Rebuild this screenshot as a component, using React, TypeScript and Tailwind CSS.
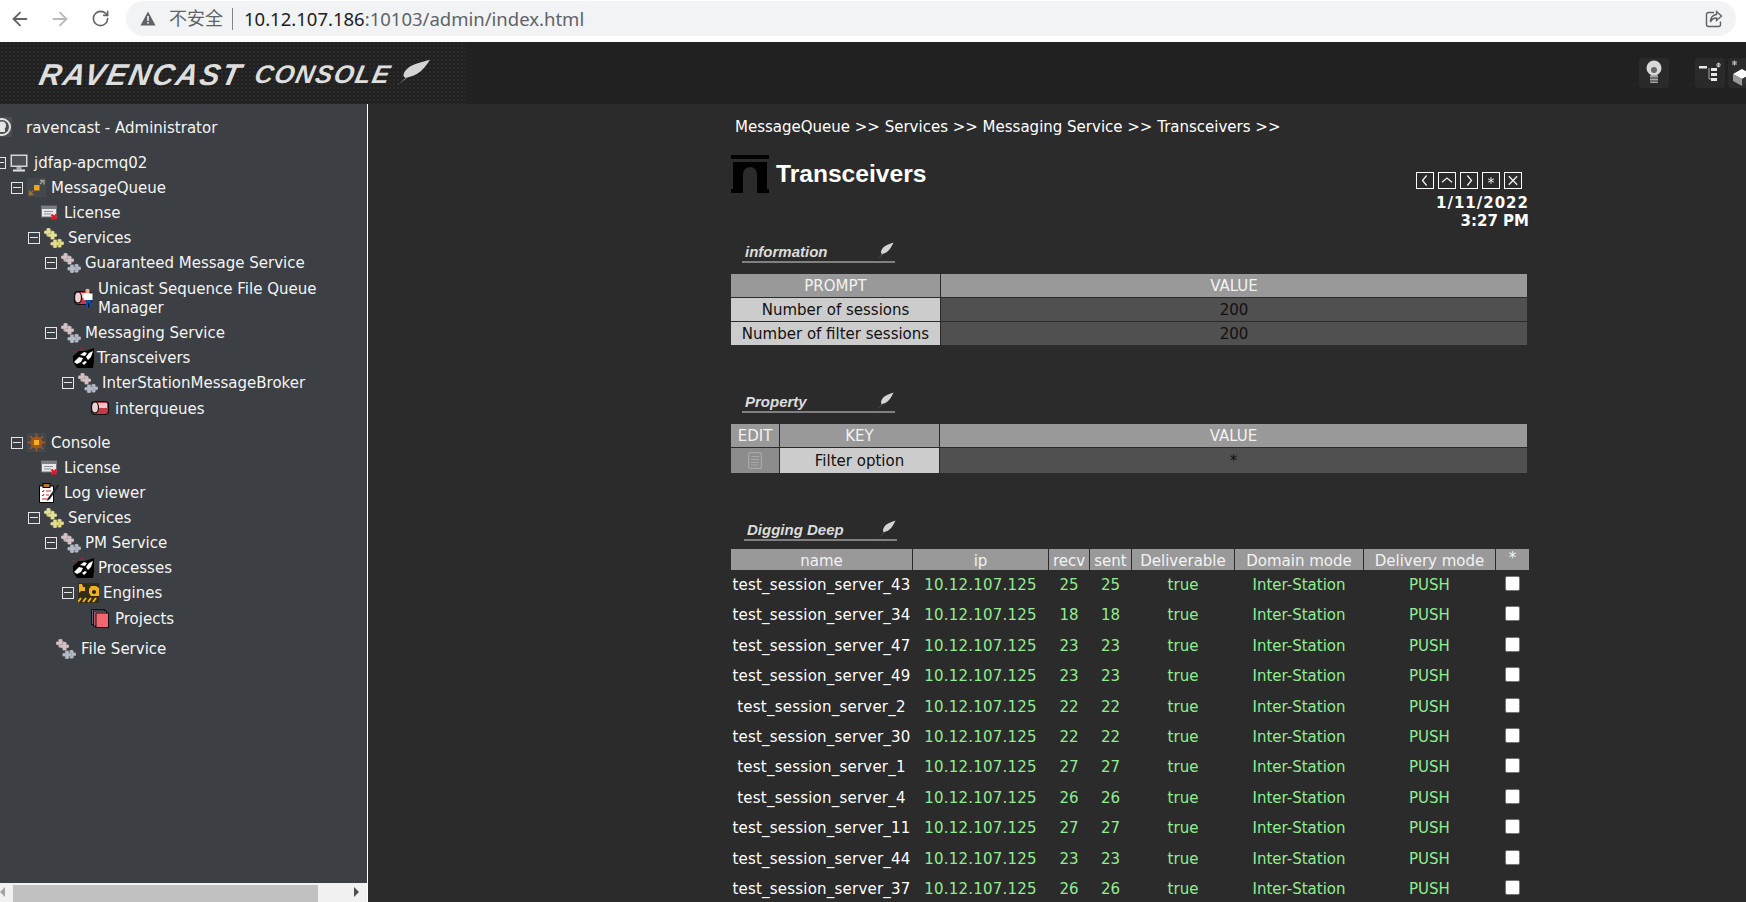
import type { ReactNode } from 'react'
import { ArrowLeft, ArrowRight, RotateCw } from 'lucide-react'

const verdana = "font-['DejaVu_Sans','Noto_Sans_CJK_SC',sans-serif]"

function GearBlob({ x, y, fill }: { x: number; y: number; fill: string }) {
  return (
    <g fill={fill} stroke="#66685f" strokeWidth="0.300">
      <rect x={x + 2.500} y={y} width="4" height="3.500" rx="1.200" />
      <rect x={x} y={y + 2.500} width="4" height="3.500" rx="1.200" />
      <rect x={x + 5} y={y + 2.500} width="4" height="3.500" rx="1.200" />
      <rect x={x + 2.500} y={y + 5} width="4" height="3.500" rx="1.200" />
      <circle cx={x + 4.500} cy={y + 4.200} r="2" stroke="none" />
    </g>
  )
}

function Gears({ tone }: { tone: 'yellow' | 'grey' }) {
  const a = tone === 'yellow' ? '#e6e199' : '#d6c2c6'
  const b = tone === 'yellow' ? '#e6dd8b' : '#b4bac8'
  return (
    <svg width="20" height="20" viewBox="0 0 20 20" className="shrink-0">
      <GearBlob x={0} y={0} fill={a} />
      <GearBlob x={4} y={3} fill={a} />
      <GearBlob x={11} y={11} fill={b} />
      <GearBlob x={6.500} y={11.500} fill={b} />
    </svg>
  )
}

function Monitor() {
  return (
    <svg width="18" height="18" viewBox="0 0 18 18" className="shrink-0">
      <rect x="0.500" y="0.500" width="17" height="12.500" fill="#d4d6d9" />
      <rect x="2" y="2" width="14" height="9.500" fill="#4d5056" />
      <rect x="6.500" y="13" width="5" height="2.500" fill="#a9adb2" />
      <rect x="3" y="15.500" width="12" height="2" fill="#dfe1e3" />
    </svg>
  )
}

function QueueArrows() {
  return (
    <svg width="19" height="19" viewBox="0 0 19 19" className="shrink-0">
      <rect width="19" height="19" fill="#44474c" />
      <rect x="7" y="7" width="5.500" height="5.500" fill="#eda51f" />
      <path d="M13 6l3-3M13 2.500h4v4" stroke="#a79f8b" strokeWidth="1.400" fill="none" />
      <path d="M6 13l-3 3M2.500 12.500v4h4" stroke="#a5762d" strokeWidth="1.400" fill="none" />
    </svg>
  )
}

function LicenseIcon() {
  return (
    <svg width="17" height="16" viewBox="0 0 17 16" className="shrink-0">
      <rect x="0.500" y="1" width="15" height="11" fill="#e7e8ea" stroke="#6f7276" />
      <rect x="0.500" y="1" width="15" height="3" fill="#7a7f87" />
      <path d="M3 6.500h9M3 9h7" stroke="#8b8f94" />
      <path d="M10.500 9.500l5 5M15.500 9.500l-5 5" stroke="#f0141e" strokeWidth="2.200" />
    </svg>
  )
}

function SunIcon() {
  return (
    <svg width="19" height="19" viewBox="0 0 19 19" className="shrink-0">
      <rect width="19" height="19" fill="#44474c" />
      <path d="M9.500 0.500v18M0.500 9.500h18M3 3l13 13M16 3L3 16" stroke="#a85a25" strokeWidth="1.500" />
      <circle cx="9.500" cy="9.500" r="6" fill="#a5561f" />
      <rect x="7" y="7" width="5" height="5" fill="#f0b02a" />
    </svg>
  )
}

function TankIcon({ man }: { man?: boolean }) {
  return (
    <svg width="20" height="20" viewBox="0 0 20 20" className="shrink-0">
      <rect x="1.500" y="3.500" width="17" height="13" rx="3.500" fill="#c73a4c" stroke="#111" strokeWidth="1.200" />
      <rect x="5" y="5" width="12" height="5" fill="#f0c4c8" />
      <ellipse cx="5" cy="9.500" rx="3.500" ry="5.500" fill="#ecd0d2" stroke="#111" strokeWidth="1.200" />
      {man && (
        <>
          <circle cx="14.500" cy="3" r="2.200" fill="#e8b48c" />
          <rect x="10.500" y="5.500" width="9" height="6.500" fill="#fff" />
          <rect x="13" y="12" width="5.500" height="7.500" fill="#124b9c" />
          <rect x="15.200" y="15" width="1" height="4.500" fill="#000" />
        </>
      )}
    </svg>
  )
}

function ShakeIcon() {
  return (
    <svg width="21" height="20" viewBox="0 0 21 20" className="shrink-0">
      <path d="M0 8l6-5h6l9-3v13l-1 7H4L0 14z" fill="#000" />
      <path d="M1 14l5-5 4 1-2 4-4 2z" fill="#fff" />
      <path d="M7 7l4-3 3 1-2 3zM13 9l3-4 4-2-2 6-3 3z" fill="#fff" />
      <path d="M9 15l3-2 2 1-3 3z" fill="#fff" />
      <rect x="0" y="2" width="1.500" height="2" fill="#c4122c" />
      <rect x="8" y="0" width="2" height="2" fill="#c4122c" />
    </svg>
  )
}

function LogIcon() {
  return (
    <svg width="20" height="20" viewBox="0 0 20 20" className="shrink-0">
      <rect x="0.500" y="3" width="14" height="16.500" fill="#fff" stroke="#000" />
      <rect x="4" y="0.500" width="7" height="4" fill="#b9762c" stroke="#000" />
      <path d="M3 8l1 1 1-2M3 12l1 1 1-2M7 8h5M7 12h3M3 16h6" stroke="#d1202a" fill="none" />
      <path d="M19 1L9 15l-1 3 3-2L20 3z" fill="#222" />
    </svg>
  )
}

function EngineIcon() {
  return (
    <svg width="21" height="20" viewBox="0 0 21 20" className="shrink-0">
      <rect x="0" y="0" width="21" height="20" fill="#332d18" />
      <path d="M1 1h3l1 3h2v4H3l-2 2zM13 3h5l3 2v8h-8l-2-3V6z" fill="#edb21f" />
      <circle cx="16" cy="9" r="2" fill="#222" />
      <path d="M0 19l3-4M5 19l3-4M10 19l3-4M15 19l3-4" stroke="#edb21f" strokeWidth="2" />
    </svg>
  )
}

function ProjectsIcon() {
  return (
    <svg width="18" height="19" viewBox="0 0 18 19" className="shrink-0">
      <rect x="0.500" y="0.500" width="13" height="15" fill="#5d6780" stroke="#111" />
      <rect x="2.500" y="2" width="13" height="15" fill="#b85c66" stroke="#111" />
      <rect x="5" y="4" width="12.500" height="14.500" fill="#f0676f" stroke="#111" />
    </svg>
  )
}

function Feather({ className }: { className: string }) {
  return (
    <svg viewBox="0 0 18 18" preserveAspectRatio="none" className={className}>
      <path d="M1 17.500C4 15 5 13.500 6 12 3.500 11 6 5 11 3c2.500-1 5-2 6.500-2.500C16 4 14 7.500 11.500 9.500 9.500 11 8 11.500 6.500 12 5 14 3 16 1 17.500z" fill="#d4d4d4" />
    </svg>
  )
}

function Box() {
  return (
    <span className="flex h-[12px] w-[12px] shrink-0 items-center justify-center border border-[#e6e6e6]">
      <span className="h-[1px] w-[8px] bg-[#e6e6e6]" />
    </span>
  )
}

type TreeRowProps = { left: string; box?: boolean; icon: ReactNode; gap: string; h?: string; children: ReactNode }

function TreeRow({ left, box, icon, gap, h = 'h-[25px]', children }: TreeRowProps) {
  return (
    <div className={`flex items-center ${h} ${left}`}>
      {box && <span className="mr-[4px]"><Box /></span>}
      {icon}
      <span className={`whitespace-nowrap pt-[2px] leading-[19px] ${gap}`}>{children}</span>
    </div>
  )
}

function Section({ title, className }: { title: string; className: string }) {
  return (
    <div className={`flex h-[20px] w-[153px] items-end justify-between border-b-2 border-[#808080] pl-[3px] pr-[1px] ${className}`}>
      <span className="font-['Liberation_Sans',sans-serif] text-[15px] font-bold italic leading-[18px] text-[#dcdcdc]">{title}</span>
      <Feather className="mb-[1px] h-[18px] w-[18px]" />
    </div>
  )
}

const sessions: [string, number][] = [
  ['test_session_server_43', 25],
  ['test_session_server_34', 18],
  ['test_session_server_47', 23],
  ['test_session_server_49', 23],
  ['test_session_server_2', 22],
  ['test_session_server_30', 22],
  ['test_session_server_1', 27],
  ['test_session_server_4', 26],
  ['test_session_server_11', 27],
  ['test_session_server_44', 23],
  ['test_session_server_37', 26],
]

const headCols = ['name', 'ip', 'recv', 'sent', 'Deliverable', 'Domain mode', 'Delivery mode']

export default function App() {
  return (
    <div className={`flex h-[902px] w-[1746px] flex-col overflow-hidden bg-[#2b2b2b] text-[15px] ${verdana}`}>
      {/* browser toolbar */}
      <div className="flex h-[42px] shrink-0 items-start bg-white pt-[1px] pr-[10px]">
        <div className="flex h-[35px] w-[126px] shrink-0 items-center pl-[9px] text-[#5f6368]">
          <ArrowLeft size={22} strokeWidth={2} />
          <ArrowRight size={22} strokeWidth={2} className="ml-[18px] text-[#b8babd]" />
          <RotateCw size={19} strokeWidth={2} className="ml-[20px]" />
        </div>
        <div className="flex h-[35px] flex-1 items-center rounded-full bg-[#f1f3f4] pl-[14px] pr-[13px] font-['Noto_Sans','Noto_Sans_CJK_SC',sans-serif] text-[18px]">
          <svg width="16" height="15" viewBox="0 0 16 15" className="shrink-0">
            <path d="M8 0.500L15.500 14.500H0.500z" fill="#5f6368" />
            <rect x="7.200" y="5" width="1.600" height="5" fill="#f1f3f4" />
            <rect x="7.200" y="11" width="1.600" height="1.600" fill="#f1f3f4" />
          </svg>
          <span className="ml-[13px] text-[#5f6368]">不安全</span>
          <span className="ml-[9px] h-[22px] w-[1px] bg-[#80868b]" />
          <span className="ml-[11px] text-[18.500px] text-[#202124]">10.12.107.186</span>
          <span className="text-[18.500px] text-[#5f6368]">:10103/admin/index.html</span>
          <svg width="18" height="18" viewBox="0 0 18 18" fill="none" stroke="#5f6368" strokeWidth="1.400" className="ml-auto">
            <path d="M9 2.500H3.500a2 2 0 0 0-2 2v10a2 2 0 0 0 2 2h10a2 2 0 0 0 2-2v-3" />
            <path d="M11.500 1.500l5 4.500-5 4.500V8C8 8 6.500 9.500 5.500 12c0-4 2-7 6-7.500z" />
          </svg>
        </div>
      </div>

      {/* console header */}
      <header className="flex h-[62px] shrink-0 items-center bg-[#212121]">
        <div className="flex h-full w-[466px] items-center bg-[radial-gradient(#2c2c2c_1px,transparent_1px)] bg-[length:4px_4px] pl-[40px] pt-[3px]">
          <span className="-skew-x-12 font-['Liberation_Sans',sans-serif] text-[30px] font-bold italic leading-none tracking-[2px] text-[#dedede]">RAVENCAST</span>
          <span className="ml-[13px] -skew-x-12 font-['Liberation_Sans',sans-serif] text-[25.500px] font-bold italic leading-none tracking-[1.400px] text-[#dedede]">CONSOLE</span>
          <Feather className="-mt-[3px] ml-[2px] h-[28px] w-[38px]" />
        </div>
        <div className="ml-auto flex items-center">
          <div className="flex h-[30px] w-[30px] items-center justify-center rounded-[3px] bg-[#2a2a2a]">
            <svg width="16" height="26" viewBox="0 0 16 26">
              <circle cx="8" cy="8" r="7.500" fill="#d8d8d8" />
              <circle cx="8" cy="10" r="3" fill="#666" />
              <rect x="4" y="15" width="8" height="8" rx="1" fill="#a5a5a5" />
              <path d="M4 18h8M4 21h8" stroke="#333" />
            </svg>
          </div>
          <div className="ml-[26px] flex h-[30px] w-[30px] items-center justify-center rounded-[3px] bg-[#2a2a2a]">
            <svg width="22" height="22" viewBox="0 0 22 22">
              <rect x="0" y="4" width="8" height="2.500" fill="#e8e8e8" />
              <rect x="12" y="6" width="6" height="3" fill="#e8e8e8" />
              <rect x="12" y="11" width="6" height="3" fill="#e8e8e8" />
              <rect x="12" y="16" width="6" height="3" fill="#e8e8e8" />
              <path d="M10 6v11h2" stroke="#aaa" fill="none" />
              <path d="M17 3h5M19.500 0.500v5M18 1l3 4M21 1l-3 4" stroke="#bbb" />
            </svg>
          </div>
          <div className="ml-[3px] flex h-[30px] w-[18px] items-center overflow-hidden rounded-l-[3px] bg-[#2a2a2a] pl-[3px]">
            <svg width="22" height="26" viewBox="0 0 22 26" className="shrink-0">
              <path d="M1 3h5M3.500 0.500v5M1.500 1l4 4M5.500 1l-4 4" stroke="#bbb" />
              <path d="M2 14l9-5 9 5-9 5z" fill="#fff" />
              <path d="M2 14v7l9 5v-7z" fill="#999" />
              <path d="M11 19v7l9-5v-7z" fill="#333" />
            </svg>
          </div>
        </div>
      </header>

      <div className="flex min-h-0 flex-1">
        {/* left tree */}
        <aside className="flex w-[368px] shrink-0 flex-col border-r border-white bg-[#3c3f43] text-[#f4f4f4]">
          <div className="min-h-0 flex-1 overflow-hidden">
            <div className="flex h-[46px] items-center">
              <svg width="12" height="20" viewBox="0 0 12 20" className="shrink-0">
                <rect width="12" height="20" fill="#4a4d52" />
                <circle cx="2" cy="10" r="8" fill="none" stroke="#e4e4e4" strokeWidth="2" />
                <circle cx="2" cy="8.500" r="4" fill="#e4e4e4" />
                <rect x="0" y="12" width="5" height="3" fill="#e4e4e4" />
              </svg>
              <span className="ml-[14px] whitespace-nowrap pt-[2px]">ravencast - Administrator</span>
            </div>
            <TreeRow left="-ml-[6px]" box icon={<Monitor />} gap="ml-[6px]">jdfap-apcmq02</TreeRow>
            <TreeRow left="ml-[11px]" box icon={<QueueArrows />} gap="ml-[5px]">MessageQueue</TreeRow>
            <TreeRow left="ml-[41px]" icon={<LicenseIcon />} gap="ml-[6px]">License</TreeRow>
            <TreeRow left="ml-[28px]" box icon={<Gears tone="yellow" />} gap="ml-[4px]">Services</TreeRow>
            <TreeRow left="ml-[45px]" box icon={<Gears tone="grey" />} gap="ml-[4px]">Guaranteed Message Service</TreeRow>
            <TreeRow left="ml-[73px]" icon={<TankIcon man />} gap="ml-[5px]" h="h-[45px]">
              Unicast Sequence File Queue
              <br />
              Manager
            </TreeRow>
            <TreeRow left="ml-[45px]" box icon={<Gears tone="grey" />} gap="ml-[4px]">Messaging Service</TreeRow>
            <TreeRow left="ml-[73px]" icon={<ShakeIcon />} gap="ml-[3px]">Transceivers</TreeRow>
            <TreeRow left="ml-[62px]" box icon={<Gears tone="grey" />} gap="ml-[4px]">InterStationMessageBroker</TreeRow>
            <TreeRow left="ml-[90px]" icon={<TankIcon />} gap="ml-[5px]" h="h-[26px]">interqueues</TreeRow>
            <div className="mt-[9px]">
              <TreeRow left="ml-[11px]" box icon={<SunIcon />} gap="ml-[5px]">Console</TreeRow>
            </div>
            <TreeRow left="ml-[41px]" icon={<LicenseIcon />} gap="ml-[6px]">License</TreeRow>
            <TreeRow left="ml-[39px]" icon={<LogIcon />} gap="ml-[5px]">Log viewer</TreeRow>
            <TreeRow left="ml-[28px]" box icon={<Gears tone="yellow" />} gap="ml-[4px]">Services</TreeRow>
            <TreeRow left="ml-[45px]" box icon={<Gears tone="grey" />} gap="ml-[4px]">PM Service</TreeRow>
            <TreeRow left="ml-[73px]" icon={<ShakeIcon />} gap="ml-[4px]">Processes</TreeRow>
            <TreeRow left="ml-[62px]" box icon={<EngineIcon />} gap="ml-[4px]">Engines</TreeRow>
            <TreeRow left="ml-[91px]" icon={<ProjectsIcon />} gap="ml-[6px]" h="h-[26px]">Projects</TreeRow>
            <div className="mt-[5px]">
              <TreeRow left="ml-[56px]" icon={<Gears tone="grey" />} gap="ml-[5px]">File Service</TreeRow>
            </div>
          </div>
          <div className="flex h-[19px] shrink-0 items-end bg-[#f1f1f1]">
            <span className="mb-[5px] h-0 w-0 border-y-[5px] border-r-[5px] border-y-transparent border-r-[#a3a3a3]" />
            <div className="ml-[8px] h-[17px] w-[305px] bg-[#c1c1c1]" />
            <span className="mb-[5px] ml-[36px] h-0 w-0 border-y-[5px] border-l-[5px] border-y-transparent border-l-[#505050]" />
          </div>
        </aside>

        {/* main panel */}
        <main className="min-w-0 flex-1 pl-[363px] pt-[12px] text-[#f2f2f2]">
          <div className="h-[22px] whitespace-nowrap pl-[4px] leading-[22px] text-white">
            MessageQueue &gt;&gt; Services &gt;&gt; Messaging Service &gt;&gt; Transceivers &gt;&gt;
          </div>

          <div className="mt-[17px] flex h-[88px] w-[798px] items-start justify-between">
            <div className="flex items-start">
              <svg width="38" height="38" viewBox="0 0 38 38" className="shrink-0">
                <rect x="0" y="0" width="38" height="4" fill="#000" />
                <path d="M2 7h34v27h2v4H26V19a7 7 0 0 0-14 0v19H0v-4h2z" fill="#000" />
              </svg>
              <h1 className="ml-[7px] font-['Liberation_Sans',sans-serif] text-[24.600px] font-bold leading-[37px] text-white">Transceivers</h1>
            </div>
            <div className="flex flex-col items-end pt-[17px]">
              <div className="mr-[7px] flex gap-[4px]">
                {[
                  <path key="l" d="M11 3L6 9l5 6" />,
                  <path key="u" d="M3 11l6-5 6 5" />,
                  <path key="r" d="M7 3l5 6-5 6" />,
                  <path key="s" d="M9 5v8M5.500 7l7 4M12.500 7l-7 4" strokeWidth="1.200" />,
                  <path key="x" d="M4 4l10 10M14 4L4 14" />,
                ].map((glyph) => (
                  <svg key={glyph.key} width="18" height="17" viewBox="0 0 18 18" fill="none" stroke="#eee" strokeWidth="1.600" className="border border-white">
                    {glyph}
                  </svg>
                ))}
              </div>
              <div className="mt-[5px] text-right text-[15px] font-bold leading-[18px] text-white">
                <span className="tracking-[1px]">1/11/2022</span>
                <br />
                3:27 PM
              </div>
            </div>
          </div>

          <Section title="information" className="ml-[11px]" />
          <div className="mt-[11px] grid w-[796px] grid-cols-[209px_586px] gap-[1px] text-center leading-[25px]">
            <div className="h-[23px] bg-[#999999]">PROMPT</div>
            <div className="h-[23px] bg-[#999999]">VALUE</div>
            <div className="h-[23px] bg-[#cccccc] text-[#111]">Number of sessions</div>
            <div className="h-[23px] bg-[#505050] text-[#111]">200</div>
            <div className="h-[23px] bg-[#cccccc] text-[#111]">Number of filter sessions</div>
            <div className="h-[23px] bg-[#505050] text-[#111]">200</div>
          </div>

          <Section title="Property" className="ml-[11px] mt-[48px]" />
          <div className="mt-[11px] grid w-[796px] grid-cols-[48px_159px_587px] gap-[1px] text-center leading-[25px]">
            <div className="h-[23px] bg-[#999999]">EDIT</div>
            <div className="h-[23px] bg-[#999999]">KEY</div>
            <div className="h-[23px] bg-[#999999]">VALUE</div>
            <div className="flex h-[25px] items-center justify-center bg-[#8c8c8c]">
              <svg width="14" height="17" viewBox="0 0 14 17" fill="none" stroke="#a8a8a8" strokeWidth="1.200">
                <rect x="0.600" y="0.600" width="12.800" height="15.800" rx="2" />
                <path d="M3 4.500h8M3 7.500h8M3 10.500h8M3 13h8" />
              </svg>
            </div>
            <div className="h-[25px] bg-[#cccccc] leading-[26px] text-[#111]">Filter option</div>
            <div className="h-[25px] bg-[#505050] leading-[26px] text-[#111]">*</div>
          </div>

          <Section title="Digging Deep" className="ml-[13px] mt-[48px]" />
          <div className="mt-[8px] grid w-[798px] grid-cols-[181px_135px_40px_41px_102px_128px_131px_33px] gap-x-[1px] text-center">
            {headCols.map((col) => (
              <div key={col} className="h-[21px] whitespace-nowrap bg-[#999999] leading-[24px]">{col}</div>
            ))}
            <div className="h-[21px] bg-[#999999] leading-[19px]">*</div>
            {sessions.map(([name, count]) => (
              <div key={name} className="contents text-[#90ee90]">
                <div className="h-[30.400px] whitespace-nowrap leading-[30px] tracking-[0.220px] text-white">{name}</div>
                <div className="h-[30.400px] leading-[30px] tracking-[0.220px]">10.12.107.125</div>
                <div className="h-[30.400px] leading-[30px]">{count}</div>
                <div className="h-[30.400px] leading-[30px]">{count}</div>
                <div className="h-[30.400px] leading-[30px]">true</div>
                <div className="h-[30.400px] leading-[30px]">Inter-Station</div>
                <div className="h-[30.400px] leading-[30px]">PUSH</div>
                <div className="flex h-[30.400px] items-start justify-center pt-[6px]">
                  <input type="checkbox" className="h-[15px] w-[15px] appearance-none rounded-[2px] border border-[#767676] bg-white" />
                </div>
              </div>
            ))}
          </div>
        </main>
      </div>
    </div>
  )
}
